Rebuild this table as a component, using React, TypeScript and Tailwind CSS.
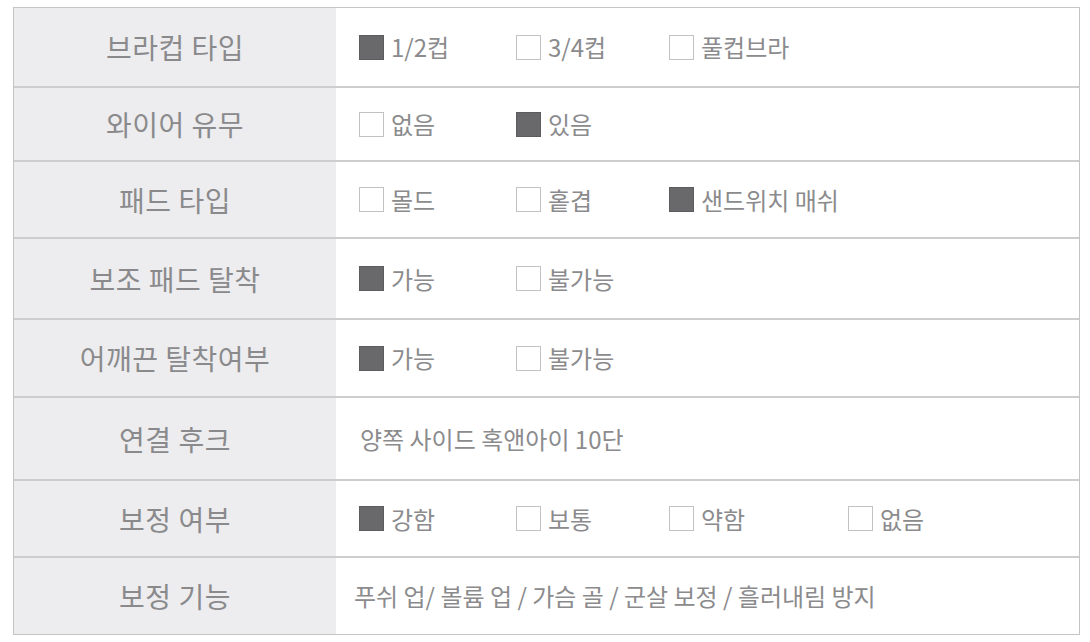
import type { FC } from 'react';

type Option = { label: string; checked: boolean };
type Row = { title: string; h: string; options?: Option[]; text?: string; textPad?: string };

const rows: Row[] = [
  {
    title: '브라컵 타입',
    h: 'h-[78px]',
    options: [
      { label: '1/2컵', checked: true },
      { label: '3/4컵', checked: false },
      { label: '풀컵브라', checked: false },
    ],
  },
  {
    title: '와이어 유무',
    h: 'h-[74px]',
    options: [
      { label: '없음', checked: false },
      { label: '있음', checked: true },
    ],
  },
  {
    title: '패드 타입',
    h: 'h-[77px]',
    options: [
      { label: '몰드', checked: false },
      { label: '홑겹', checked: false },
      { label: '샌드위치 매쉬', checked: true },
    ],
  },
  {
    title: '보조 패드 탈착',
    h: 'h-[81px]',
    options: [
      { label: '가능', checked: true },
      { label: '불가능', checked: false },
    ],
  },
  {
    title: '어깨끈 탈착여부',
    h: 'h-[78px]',
    options: [
      { label: '가능', checked: true },
      { label: '불가능', checked: false },
    ],
  },
  { title: '연결 후크', h: 'h-[83px]', text: '양쪽 사이드 혹앤아이 10단', textPad: 'pl-[24px]' },
  {
    title: '보정 여부',
    h: 'h-[77px]',
    options: [
      { label: '강함', checked: true },
      { label: '보통', checked: false },
      { label: '약함', checked: false },
      { label: '없음', checked: false },
    ],
  },
  {
    title: '보정 기능',
    h: 'h-[78px]',
    text: '푸쉬 업/ 볼륨 업 / 가슴 골 / 군살 보정 / 흘러내림 방지',
    textPad: 'pl-[18px]',
  },
];

// column widths of the option slots, measured from the screenshot
const slotWidths = ['w-[157px]', 'w-[153px]', 'w-[179px]', 'w-[120px]'];

const Box: FC<{ checked: boolean }> = ({ checked }) => (
  <span
    className={
      checked
        ? 'w-[25px] h-[25px] shrink-0 bg-[#69696c] border border-[#5c5c5f]'
        : 'w-[25px] h-[25px] shrink-0 bg-white border border-[#c2c2c2]'
    }
  />
);

const App: FC = () => {
  return (
    <div
      className="w-[1090px] h-[642px] bg-white pt-[7px] pl-[13px]"
      style={{ fontFamily: '"Noto Sans CJK KR", "Noto Sans", sans-serif' }}
    >
      <div className="w-[1067px] border-[1.5px] border-[#c4c4c4]">
        {rows.map((row, i) => (
          <div
            key={row.title}
            className={`flex ${row.h} ${i > 0 ? 'border-t-2 border-[#cdcdcd]' : ''}`}
          >
            <div className="w-[322px] shrink-0 bg-[#ededef] flex items-center justify-center text-[28px] text-[#8a8a8c] tracking-[0.5px]">
              {row.title}
            </div>
            {row.options ? (
              <div className="flex items-center pl-[23px]">
                {row.options.map((opt, j) => (
                  <div key={opt.label} className={`flex items-center gap-[7px] ${slotWidths[j]}`}>
                    <Box checked={opt.checked} />
                    <span className="text-[24px] text-[#8b8b8d] leading-none">{opt.label}</span>
                  </div>
                ))}
              </div>
            ) : (
              <div className={`flex items-center ${row.textPad} text-[24px] text-[#8b8b8d]`}>
                {row.text}
              </div>
            )}
          </div>
        ))}
      </div>
    </div>
  );
};

export default App;
